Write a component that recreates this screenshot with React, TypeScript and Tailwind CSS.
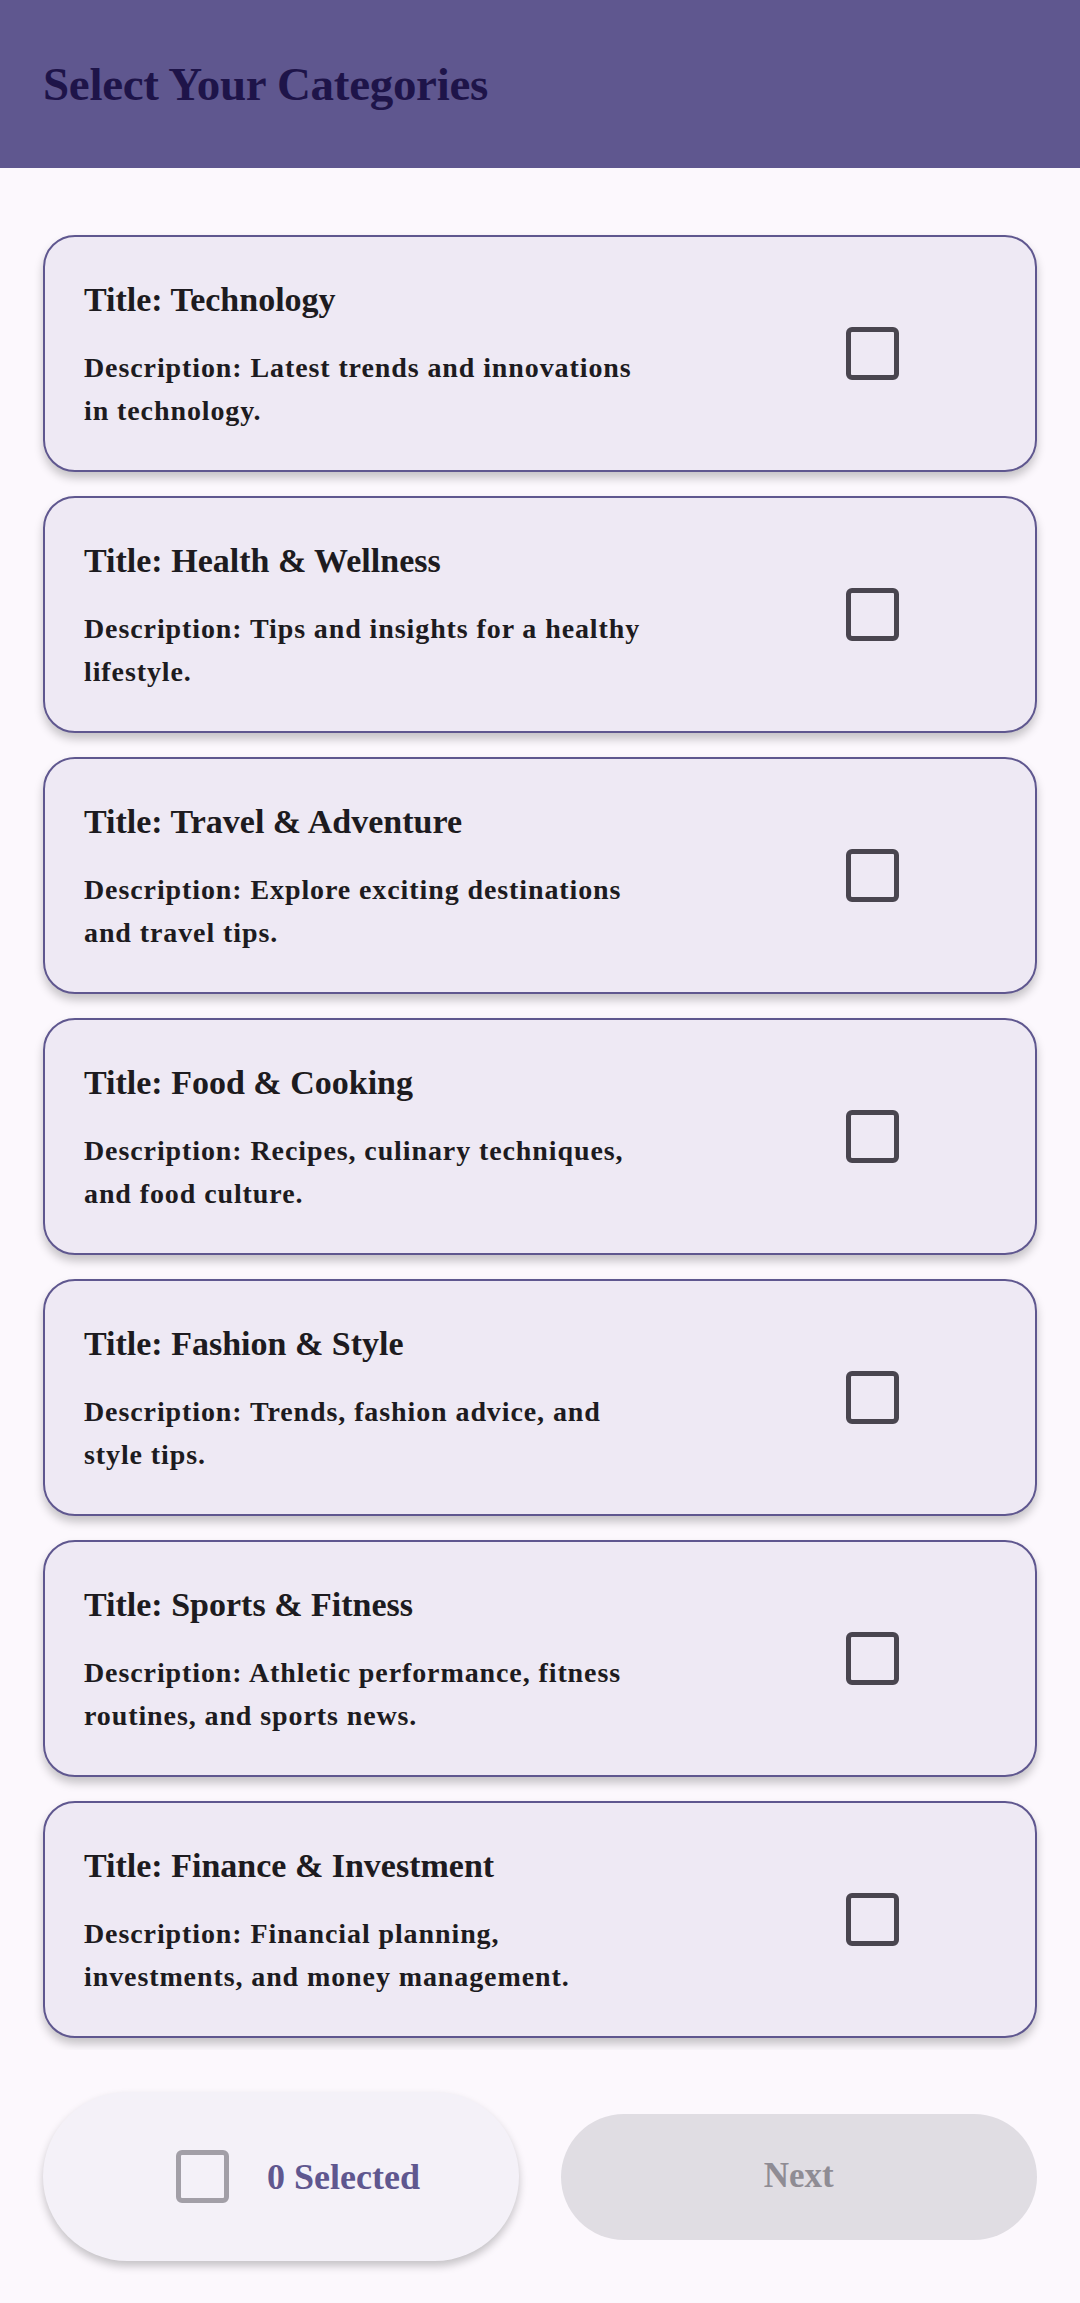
import { useState } from "react";

interface Category {
  title: string;
  description: string;
}

const CATEGORIES: Category[] = [
  { title: "Technology", description: "Latest trends and innovations in technology." },
  { title: "Health & Wellness", description: "Tips and insights for a healthy lifestyle." },
  { title: "Travel & Adventure", description: "Explore exciting destinations and travel tips." },
  { title: "Food & Cooking", description: "Recipes, culinary techniques, and food culture." },
  { title: "Fashion & Style", description: "Trends, fashion advice, and style tips." },
  { title: "Sports & Fitness", description: "Athletic performance, fitness routines, and sports news." },
  { title: "Finance & Investment", description: "Financial planning, investments, and money management." },
];

function CheckBox({ checked, muted }: { checked: boolean; muted?: boolean }) {
  return (
    <div
      className={`w-[53px] h-[53px] rounded-[6px] border-[5px] flex items-center justify-center ${
        muted ? "border-[#a29fa7]" : "border-[#49454f]"
      } ${checked ? "bg-[#5f578f] border-[#5f578f]" : ""}`}
    >
      {checked && (
        <svg viewBox="0 0 24 24" className="w-[40px] h-[40px]" fill="none" stroke="white" strokeWidth={3}>
          <path d="M5 12.5l4.5 4.5L19 7.5" />
        </svg>
      )}
    </div>
  );
}

function App() {
  const [selected, setSelected] = useState<string[]>([]);

  const toggle = (title: string) => {
    setSelected(prev => (prev.includes(title) ? prev.filter(t => t !== title) : [...prev, title]));
  };

  return (
    <div className="h-[2303px] flex flex-col bg-[#fcf8fd] font-['Liberation_Serif',serif] overflow-hidden">
      {/* Header */}
      <header className="h-[168px] shrink-0 bg-[#5f578f] pl-[43px] pt-[56px]">
        <h1 className="text-[47px] leading-[56px] font-bold text-[#1e1449] tracking-[-0.3px]">
          Select Your Categories
        </h1>
      </header>

      {/* Category list */}
      <div className="h-[1882px] shrink-0 overflow-hidden px-[43px] pt-[67px] flex flex-col gap-[24px]">
        {CATEGORIES.map(cat => (
          <div
            key={cat.title}
            onClick={() => toggle(cat.title)}
            className="h-[237px] shrink-0 bg-[#eee9f4] border-[2.5px] border-[#5f578f] rounded-[32px] shadow-[0_6px_10px_rgba(0,0,0,0.22)] flex items-center justify-between pl-[39px]"
          >
            <div className="self-start pt-[43px] w-[570px] text-[#1d1b20]">
              <div className="text-[34px] leading-[40px] font-bold">{`Title: ${cat.title}`}</div>
              <div className="mt-[26px] text-[28px] leading-[43px] font-bold tracking-[0.9px]">
                {`Description: ${cat.description}`}
              </div>
            </div>
            <div className="mr-[136px]">
              <CheckBox checked={selected.includes(cat.title)} />
            </div>
          </div>
        ))}
      </div>

      {/* Bottom bar */}
      <div className="flex-1 px-[43px] flex items-center gap-[42px]">
        <div className="w-[476px] h-[169px] rounded-full bg-[#f4f1f8] shadow-[0_5px_8px_rgba(0,0,0,0.22)] flex items-center pl-[133px] gap-[38px]">
          <CheckBox checked={false} muted />
          <span className="text-[36px] font-bold text-[#5f578f]">{`${selected.length} Selected`}</span>
        </div>
        <button
          disabled={selected.length === 0}
          className="w-[477px] h-[126px] rounded-full bg-[#e0dde3] text-[35px] font-bold text-[#8f8c94]"
        >
          Next
        </button>
      </div>
    </div>
  );
}

export default App;
